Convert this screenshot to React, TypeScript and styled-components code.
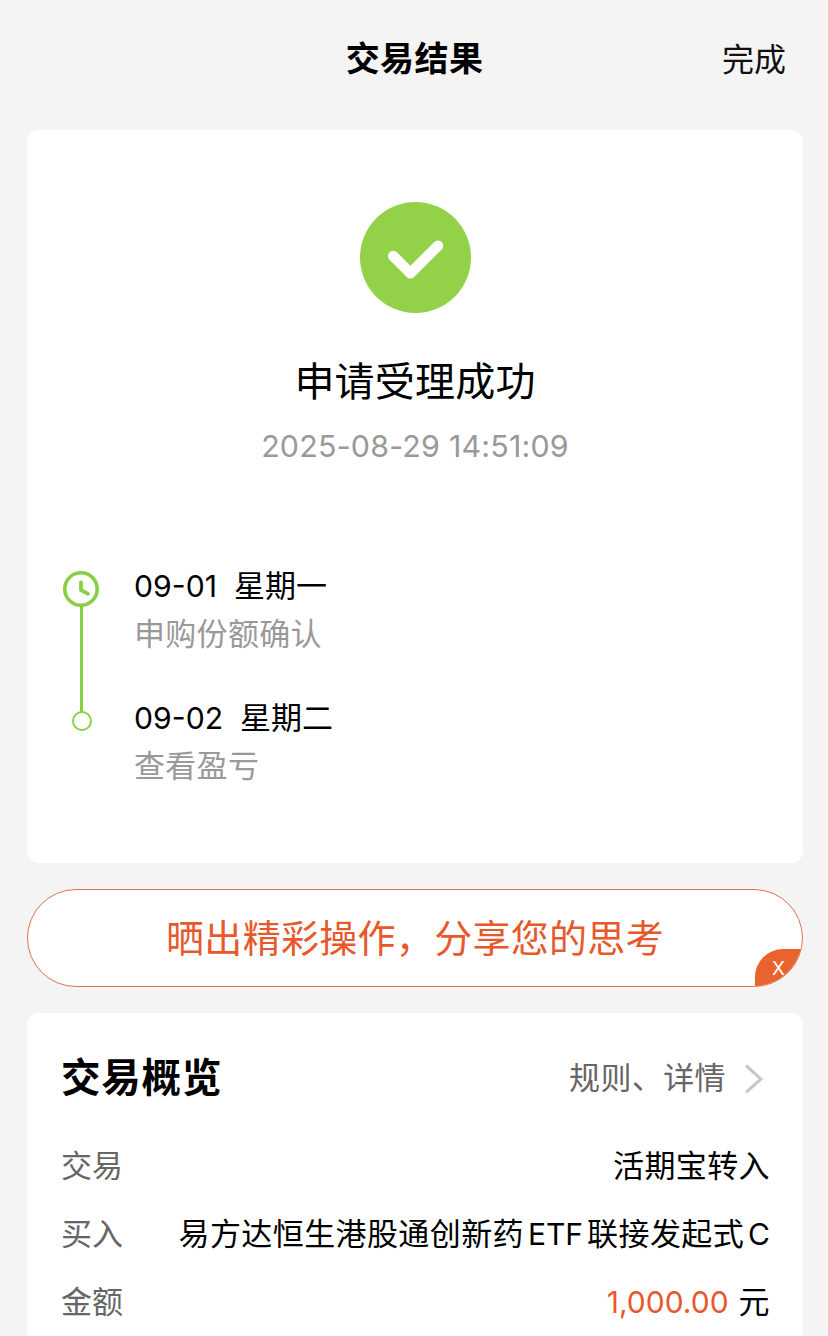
import React from "react";
import styled, { createGlobalStyle } from "styled-components";

const GlobalStyle = createGlobalStyle`
  * { box-sizing: border-box; }
  body {
    margin: 0;
    background: #f4f4f4;
    color: #000;
    font-family: Inter, "Noto Sans CJK SC", sans-serif;
  }
  html, body { overflow: hidden; }
`;

const Page = styled.main`
  width: 828px;
  height: 1336px;
  padding: 0 25px 0 27px;
  overflow: hidden;
`;

const Header = styled.header`
  display: grid;
  grid-template-columns: 1fr auto 1fr;
  align-items: center;
  height: 130px;
  padding: 0 17px 13px 16px;
`;

const PageTitle = styled.h1`
  grid-column: 2;
  margin: 0;
  font-size: 34px;
  font-weight: 600;
  line-height: 48px;
  letter-spacing: 0.4px;
`;

const DoneButton = styled.button`
  justify-self: end;
  padding: 2px 0 0;
  border: 0;
  background: none;
  color: #111;
  font-family: inherit;
  font-size: 32px;
  line-height: 48px;
`;

const Card = styled.section`
  background: #fff;
  border-radius: 12px;
`;

const ResultCard = styled(Card)`
  display: flex;
  flex-direction: column;
  height: 733px;
  padding: 72px 36px 0;
`;

const SuccessIcon = styled.svg`
  display: block;
  align-self: center;
  width: 112px;
  height: 112px;
`;

const ResultTitle = styled.h2`
  margin: 40px 0 0;
  text-align: center;
  font-size: 40px;
  font-weight: 400;
  line-height: 56px;
  letter-spacing: 0.2px;
`;

const ResultTime = styled.time`
  margin-top: 14px;
  text-align: center;
  color: #999;
  font-size: 30.4px;
  line-height: 44px;
  letter-spacing: 0.2px;
`;

const Timeline = styled.div`
  display: flex;
  gap: 35px;
  margin-top: 94px;
`;

const Rail = styled.svg`
  display: block;
  width: 36px;
  height: 164px;
  margin-top: 9px;
`;

const Steps = styled.ol`
  display: flex;
  flex-direction: column;
  gap: 36px;
  margin: 0;
  padding: 0;
  list-style: none;
`;

const Step = styled.li`
  line-height: 48px;
  font-size: 31px;
`;

const StepDate = styled.div`
  display: flex;
  gap: 17px;
`;

const StepDay = styled.span`
  font-size: 30.2px;
`;

const StepNote = styled.div`
  color: #999;
  letter-spacing: 0.3px;
`;

const ShareBanner = styled.div`
  position: relative;
  display: flex;
  align-items: center;
  justify-content: center;
  height: 98px;
  margin: 26px 0;
  border: 1px solid #d97448;
  border-radius: 49px;
  background: #fff;
  overflow: hidden;
  color: #e7582b;
  font-size: 38px;
  line-height: 54px;
  letter-spacing: 0.3px;
`;

const CloseBadge = styled.button`
  position: absolute;
  right: -1px;
  bottom: -1px;
  width: 48px;
  height: 38px;
  padding: 1px 1px 0 0;
  border: 0;
  border-radius: 28px 0 0 0;
  background: #e96330;
  color: #fff;
  font-family: inherit;
  font-size: 19px;
  font-weight: 400;
  line-height: 38px;
`;

const OverviewCard = styled(Card)`
  height: 400px;
  padding: 34px 33px 0 34px;
`;

const OverviewHead = styled.div`
  display: flex;
  align-items: center;
  justify-content: space-between;
  height: 62px;
  margin-bottom: 23px;
`;

const OverviewTitle = styled.h2`
  margin: 0;
  font-size: 39.5px;
  font-weight: 600;
  line-height: 60px;
  letter-spacing: 0.8px;
`;

const DetailLink = styled.a`
  display: flex;
  align-items: center;
  gap: 17px;
  padding-right: 7px;
  color: #666;
  font-size: 31px;
  line-height: 60px;
  letter-spacing: 0.4px;
`;

const Chevron = styled.svg`
  display: block;
  width: 20px;
  height: 32px;
`;

const Row = styled.div`
  display: flex;
  justify-content: space-between;
  height: 68px;
  line-height: 68px;
  font-size: 31px;
`;

const Label = styled.span`
  color: #666;
`;

const Value = styled.span`
  letter-spacing: 0.4px;
  white-space: nowrap;
`;

const Latin = styled.span<{ $before?: number; $after?: number }>`
  margin: 0 ${(p) => p.$after ?? 0}px 0 ${(p) => p.$before ?? 0}px;
  font-size: 30px;
  letter-spacing: 0;
`;

const Amount = styled(Latin)`
  color: #e7582b;
`;

const steps = [
  { day: "09-01", week: "星期一", note: "申购份额确认" },
  { day: "09-02", week: "星期二", note: "查看盈亏" },
];

export default function App() {
  return (
    <>
      <GlobalStyle />
      <Page>
        <Header>
          <PageTitle>交易结果</PageTitle>
          <DoneButton>完成</DoneButton>
        </Header>

        <ResultCard>
          <SuccessIcon viewBox="0 0 112 112">
            <circle cx="56.5" cy="55.5" r="55.5" fill="#93d248" />
            <path d="M34.2 54 L51.4 71.2 L79 43.7" fill="none" stroke="#fff" strokeWidth="10.5" strokeLinecap="round" strokeLinejoin="round" />
          </SuccessIcon>
          <ResultTitle>申请受理成功</ResultTitle>
          <ResultTime>2025-08-29 14:51:09</ResultTime>

          <Timeline>
            <Rail viewBox="0 0 36 164" fill="none" stroke="#87d043">
              <path d="M18.5 35 V141" strokeWidth="3" />
              <circle cx="18" cy="18" r="16.2" strokeWidth="3.6" />
              <path d="M18 11.5 V19 L25 22.8" strokeWidth="3.8" strokeLinecap="round" strokeLinejoin="round" />
              <circle cx="19" cy="150" r="9" strokeWidth="2" fill="#fff" />
            </Rail>
            <Steps>
              {steps.map((s) => (
                <Step key={s.day}>
                  <StepDate>
                    <StepDay>{s.day}</StepDay>
                    <span>{s.week}</span>
                  </StepDate>
                  <StepNote>{s.note}</StepNote>
                </Step>
              ))}
            </Steps>
          </Timeline>
        </ResultCard>

        <ShareBanner>
          晒出精彩操作，分享您的思考
          <CloseBadge>X</CloseBadge>
        </ShareBanner>

        <OverviewCard>
          <OverviewHead>
            <OverviewTitle>交易概览</OverviewTitle>
            <DetailLink>
              规则、详情
              <Chevron viewBox="0 0 20 32">
                <path d="M3 3.6 L18 17 L3 30.4" fill="none" stroke="#c8c8c8" strokeWidth="3.2" />
              </Chevron>
            </DetailLink>
          </OverviewHead>
          <Row>
            <Label>交易</Label>
            <Value>活期宝转入</Value>
          </Row>
          <Row>
            <Label>买入</Label>
            <Value>
              易方达恒生港股通创新药<Latin $before={4} $after={4}>ETF</Latin>联接发起式<Latin $before={4}>C</Latin>
            </Value>
          </Row>
          <Row>
            <Label>金额</Label>
            <Value>
              <Amount $after={10}>1,000.00</Amount>元
            </Value>
          </Row>
        </OverviewCard>
      </Page>
    </>
  );
}
